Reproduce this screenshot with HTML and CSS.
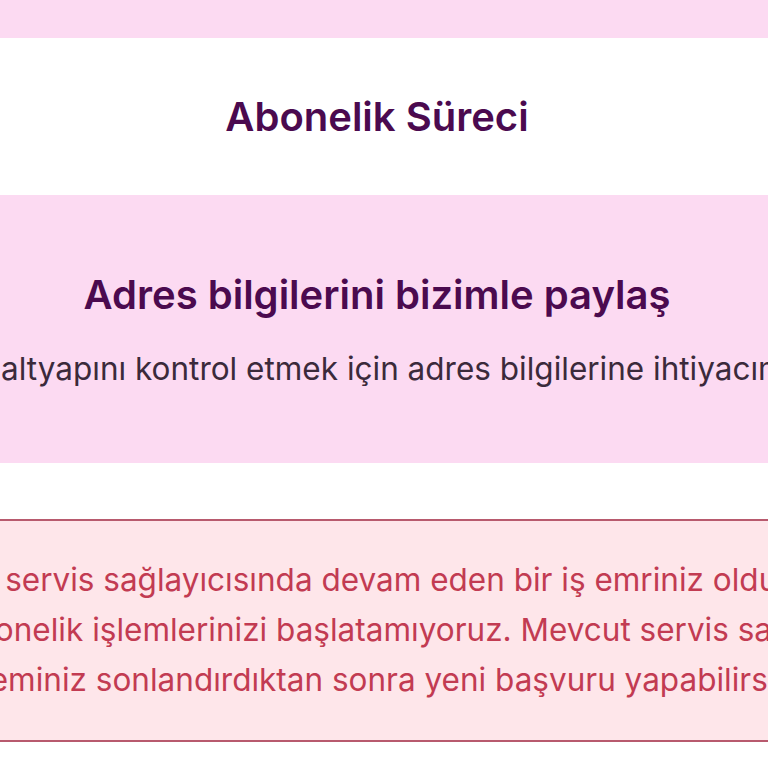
FILE: index.html
```html
<!DOCTYPE html>
<html lang="tr">
<head>
<meta charset="utf-8">
<title>Abonelik Süreci</title>
<link rel="stylesheet" href="styles.css">
</head>
<body>
<div class="topbar"></div>
<header class="header">
  <div class="inner"><h1 class="title">Abonelik Süreci</h1></div>
</header>
<section class="intro">
  <div class="inner">
    <h2 class="heading">Adres bilgilerini bizimle paylaş</h2>
    <p class="line sub">Bölgendeki altyapını kontrol etmek için adres bilgilerine ihtiyacımız var.</p>
  </div>
</section>
<section class="alert">
  <div class="inner">
    <p class="line warn w1">Mevcut servis sağlayıcısında devam eden bir iş emriniz olduğu için</p>
    <p class="line warn w2">abonelik işlemlerinizi başlatamıyoruz. Mevcut servis sağlayıcınızla</p>
    <p class="line warn w3">işleminiz sonlandırdıktan sonra yeni başvuru yapabilirsiniz.</p>
  </div>
</section>
</body>
</html>
```
FILE: styles.css
```css
html, body {
  margin: 0;
  padding: 0;
  background: #ffffff;
  overflow: hidden;
  font-family: Inter, "Noto Sans", sans-serif;
}
.inner {
  width: 754px;
  display: flex;
  flex-direction: column;
  align-items: center;
}
.topbar {
  height: 38px;
  background: #fcdaf2;
}
.header {
  height: 157px;
  display: flex;
  align-items: center;
}
.title {
  margin: 0;
  font-size: 40px;
  font-weight: 600;
  color: #4b0a4f;
  white-space: nowrap;
}
.intro {
  height: 268px;
  background: #fcdaf2;
  display: flex;
  align-items: center;
}
.heading {
  margin: 0;
  font-size: 40px;
  font-weight: 600;
  color: #4b0a4f;
  white-space: nowrap;
}
.line {
  margin: 0;
  white-space: nowrap;
  display: flex;
  justify-content: center;
}
.sub {
  margin-top: 30px;
  margin-right: 54px;
  font-size: 31.5px;
  color: #3b2a3b;
}
.alert {
  margin-top: 56px;
  background: #fee6ea;
  border-top: 2px solid #b85a6e;
  border-bottom: 2px solid #b85a6e;
  padding: 34px 0 35px;
}
.warn {
  font-size: 31.5px;
  line-height: 50px;
  color: #c23b52;
}
.w1 {
  margin-left: 8px;
}
.w2 {
  margin-left: 140px;
}
.w3 {
  margin-left: 32px;
}
```
